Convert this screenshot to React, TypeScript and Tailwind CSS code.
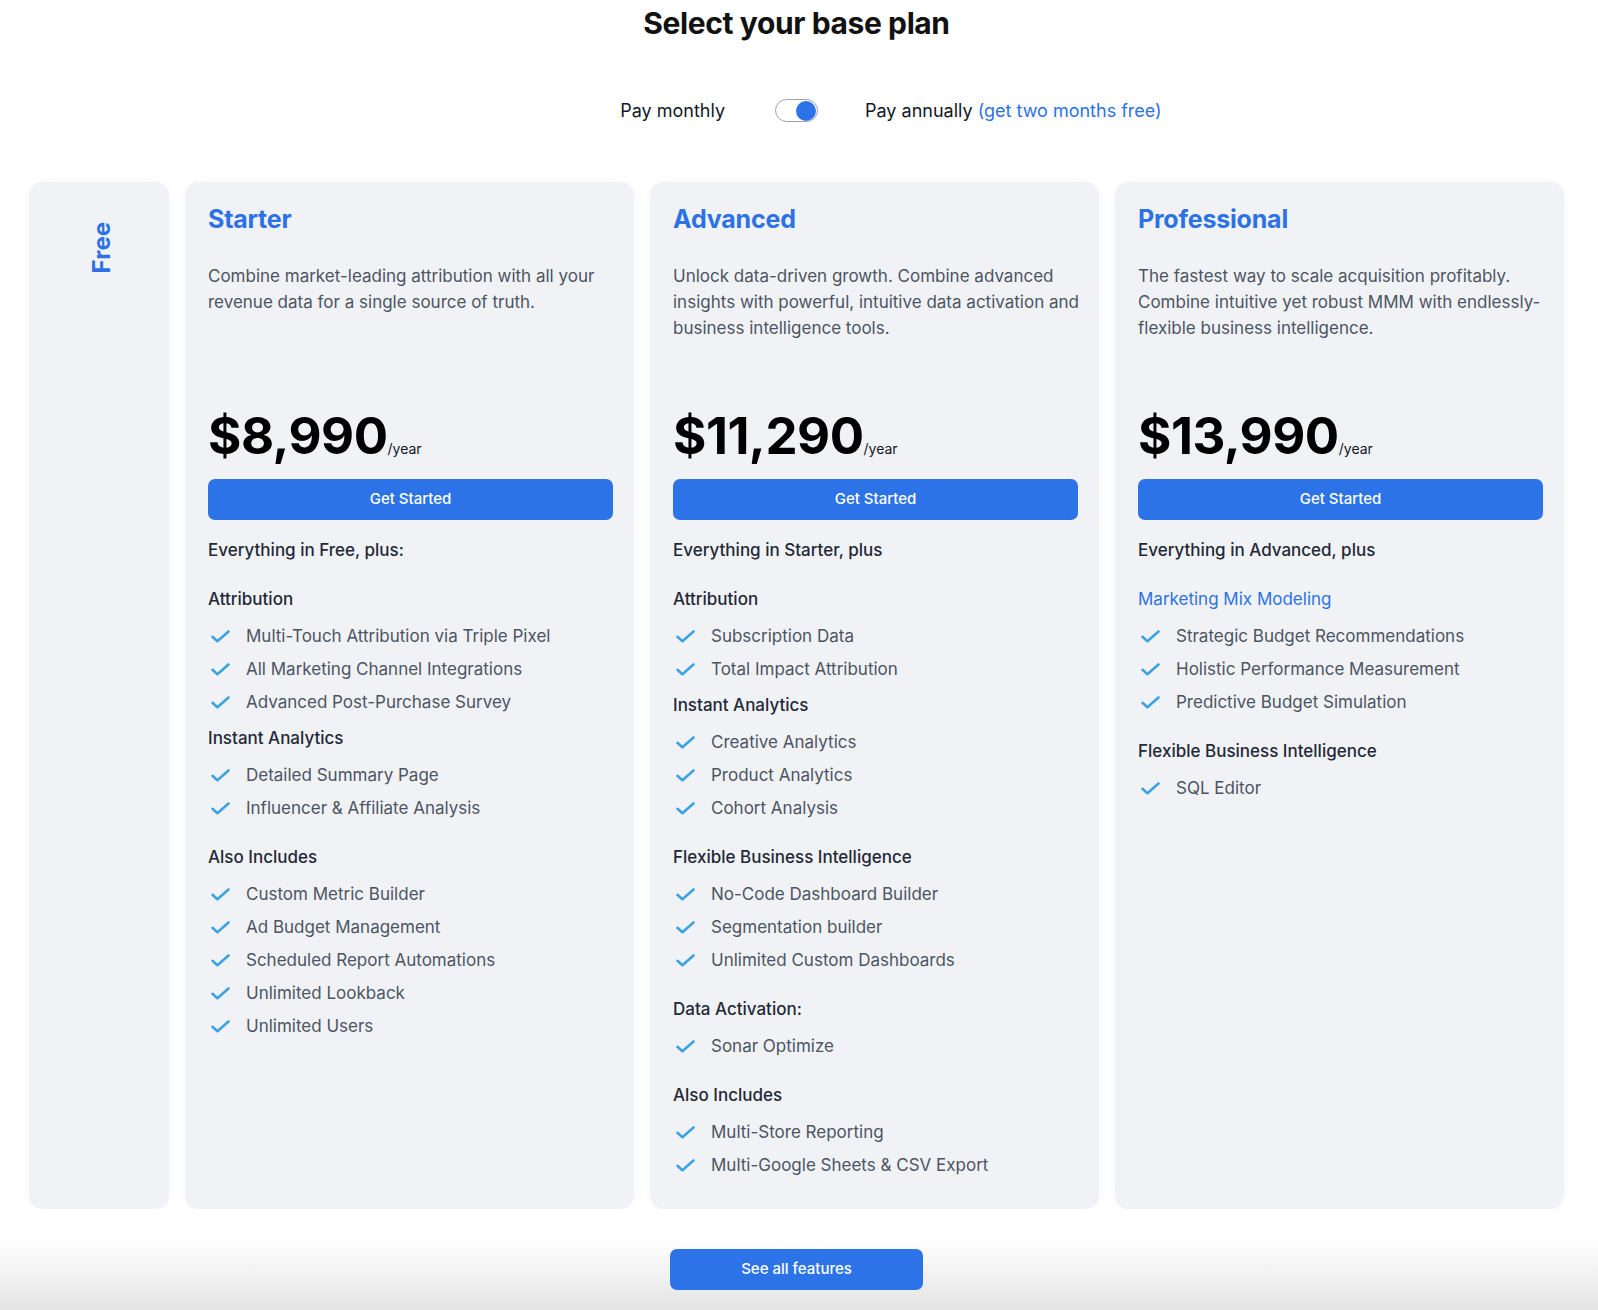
import React from "react";

type Group = { title: string; blue?: boolean; items: string[]; tight?: boolean };
type Plan = {
  name: string;
  desc: string;
  price: string;
  everything: string;
  groups: Group[];
};

const plans: Plan[] = [
  {
    name: "Starter",
    desc: "Combine market-leading attribution with all your revenue data for a single source of truth.",
    price: "$8,990",
    everything: "Everything in Free, plus:",
    groups: [
      {
        title: "Attribution",
        items: [
          "Multi-Touch Attribution via Triple Pixel",
          "All Marketing Channel Integrations",
          "Advanced Post-Purchase Survey",
        ],
      },
      {
        title: "Instant Analytics",
        tight: true,
        items: ["Detailed Summary Page", "Influencer & Affiliate Analysis"],
      },
      {
        title: "Also Includes",
        items: [
          "Custom Metric Builder",
          "Ad Budget Management",
          "Scheduled Report Automations",
          "Unlimited Lookback",
          "Unlimited Users",
        ],
      },
    ],
  },
  {
    name: "Advanced",
    desc: "Unlock data-driven growth. Combine advanced insights with powerful, intuitive data activation and business intelligence tools.",
    price: "$11,290",
    everything: "Everything in Starter, plus",
    groups: [
      { title: "Attribution", items: ["Subscription Data", "Total Impact Attribution"] },
      {
        title: "Instant Analytics",
        tight: true,
        items: ["Creative Analytics", "Product Analytics", "Cohort Analysis"],
      },
      {
        title: "Flexible Business Intelligence",
        items: ["No-Code Dashboard Builder", "Segmentation builder", "Unlimited Custom Dashboards"],
      },
      { title: "Data Activation:", items: ["Sonar Optimize"] },
      { title: "Also Includes", items: ["Multi-Store Reporting", "Multi-Google Sheets & CSV Export"] },
    ],
  },
  {
    name: "Professional",
    desc: "The fastest way to scale acquisition profitably. Combine intuitive yet robust MMM with endlessly-flexible business intelligence.",
    price: "$13,990",
    everything: "Everything in Advanced, plus",
    groups: [
      {
        title: "Marketing Mix Modeling",
        blue: true,
        items: [
          "Strategic Budget Recommendations",
          "Holistic Performance Measurement",
          "Predictive Budget Simulation",
        ],
      },
      { title: "Flexible Business Intelligence", items: ["SQL Editor"] },
    ],
  },
];

function Check() {
  return (
    <svg width="19" height="13" viewBox="0 0 19 13" fill="none">
      <path
        d="M1.5 6.8 L6.4 11.2 L17.5 1.5"
        stroke="#3ba3e2"
        strokeWidth="2.6"
        strokeLinecap="round"
        strokeLinejoin="round"
      />
    </svg>
  );
}

function PlanCard({ plan }: { plan: Plan }) {
  return (
    <div className="flex-1 rounded-[14px] bg-[#f1f2f6] shadow-[0_0_10px_rgba(0,0,0,0.04)] pl-[23px] pr-[20px] pt-[22px] pb-[27px]">
      <h2 className="text-[25px] leading-[30px] font-bold text-[#2c72e6] tracking-[-0.2px]">{plan.name}</h2>
      <p className="mt-[29px] h-[147px] text-[17px] leading-[26px] text-[#4b5563]">{plan.desc}</p>
      <div className="flex items-baseline">
        <span className="text-[51px] leading-[52px] font-bold text-black tracking-[-0.5px]">{plan.price}</span>
        <span className="text-[14px] text-[#111827]">/year</span>
      </div>
      <button className="mt-[17px] w-[calc(100%-1px)] h-[41px] rounded-[7px] bg-[#2c73e8] text-white text-[15px] font-medium">
        Get Started
      </button>
      <div className="mt-[18px] text-[17px] leading-[24px] font-medium text-[#1f2937]">{plan.everything}</div>
      <div className="mt-[25px]">
        {plan.groups.map((g, i) => (
          <div key={g.title} className={i === 0 ? "" : g.tight ? "mt-[7px]" : "mt-[20px]"}>
            <div
              className={
                g.blue
                  ? "text-[17px] leading-[24px] text-[#2c72e6]"
                  : "text-[17px] leading-[24px] font-medium text-[#1f2937]"
              }
            >
              {g.title}
            </div>
            <ul className="mt-[9px]">
              {g.items.map((it) => (
                <li key={it} className="flex items-center h-[33px]">
                  <span className="w-[24px] flex justify-center">
                    <Check />
                  </span>
                  <span className="ml-[14px] text-[17px] text-[#4b5563]">{it}</span>
                </li>
              ))}
            </ul>
          </div>
        ))}
      </div>
    </div>
  );
}

export default function App() {
  return (
    <div
      className="w-full min-h-[1310px] bg-white flex flex-col pr-[5px]"
      style={{ fontFamily: "Inter, 'Noto Sans', sans-serif" }}
    >
      <h1 className="pt-[5px] text-center text-[30px] leading-[36px] font-bold text-[#111111] tracking-[-0.4px]">
        Select your base plan
      </h1>
      <div className="mt-[57px] grid grid-cols-[1fr_auto_1fr] items-center text-[18px] leading-[25px] text-[#111827]">
        <div className="text-right pr-[50px]">Pay monthly</div>
        <div className="w-[43px] h-[23px] rounded-full border-[1.5px] border-[#9ca3af] bg-white flex items-center justify-end pr-[1px]">
          <div className="w-[20px] h-[20px] rounded-full bg-[#2c73e8]" />
        </div>
        <div className="pl-[47px]">
          Pay annually <span className="text-[#2c72e6]">(get two months free)</span>
        </div>
      </div>
      <div className="mt-[59px] flex gap-[16px] px-[29px]">
        <div className="w-[140px] shrink-0 rounded-[14px] bg-[#f1f2f6] shadow-[0_0_10px_rgba(0,0,0,0.04)] flex justify-center pt-[40px] pl-[5px]">
          <div className="[writing-mode:vertical-rl] rotate-180 text-[24px] font-bold text-[#2c72e6] leading-[24px] h-fit">
            Free
          </div>
        </div>
        {plans.map((p) => (
          <PlanCard key={p.name} plan={p} />
        ))}
      </div>
      <div className="flex-1 -mr-[5px] pr-[5px] bg-gradient-to-b from-white from-30% to-[#e4e4e4] flex justify-center pt-[40px]">
        <button className="w-[253px] h-[41px] rounded-[7px] bg-[#2c73e8] text-white text-[15px] font-medium">
          See all features
        </button>
      </div>
    </div>
  );
}
